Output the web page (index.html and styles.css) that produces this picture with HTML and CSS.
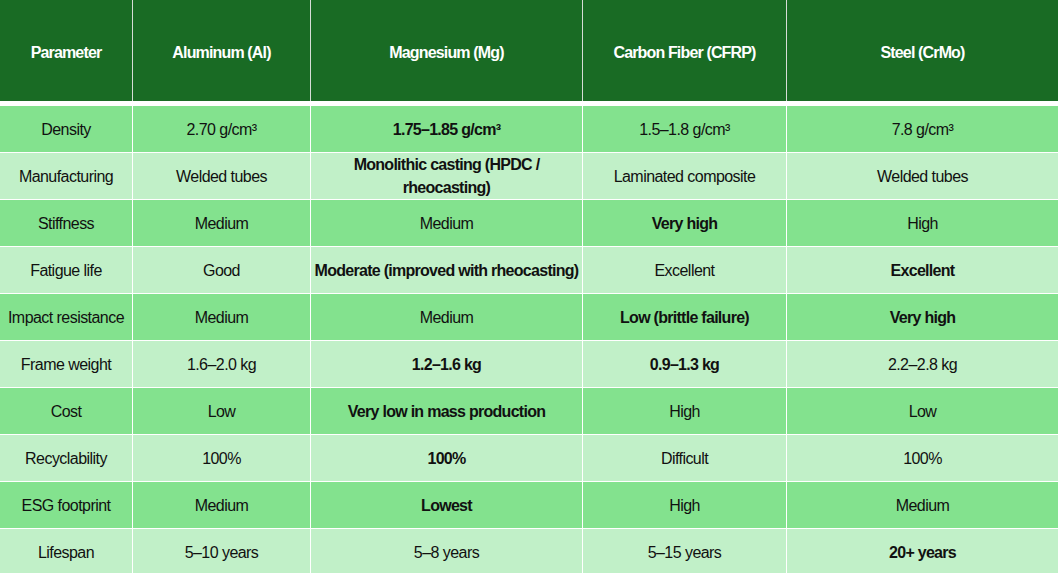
FILE: index.html
```html
<!DOCTYPE html>
<html lang="en">
<head>
<meta charset="utf-8">
<title>Bicycle frame materials comparison</title>
<link rel="stylesheet" href="styles.css">
</head>
<body>
<div class="sheet">
  <div class="head-row">
    <div class="hcell">Parameter</div>
    <div class="hcell">Aluminum (Al)</div>
    <div class="hcell">Magnesium (Mg)</div>
    <div class="hcell">Carbon Fiber (CFRP)</div>
    <div class="hcell">Steel (CrMo)</div>
  </div>
  <div class="body-rows">
    <div class="row dark">
      <div class="cell">Density</div>
      <div class="cell">2.70 g/cm³</div>
      <div class="cell b">1.75–1.85 g/cm³</div>
      <div class="cell">1.5–1.8 g/cm³</div>
      <div class="cell">7.8 g/cm³</div>
    </div>
    <div class="row light">
      <div class="cell">Manufacturing</div>
      <div class="cell">Welded tubes</div>
      <div class="cell b">Monolithic casting (HPDC /<br>rheocasting)</div>
      <div class="cell">Laminated composite</div>
      <div class="cell">Welded tubes</div>
    </div>
    <div class="row dark">
      <div class="cell">Stiffness</div>
      <div class="cell">Medium</div>
      <div class="cell">Medium</div>
      <div class="cell b">Very high</div>
      <div class="cell">High</div>
    </div>
    <div class="row light">
      <div class="cell">Fatigue life</div>
      <div class="cell">Good</div>
      <div class="cell b">Moderate (improved with rheocasting)</div>
      <div class="cell">Excellent</div>
      <div class="cell b">Excellent</div>
    </div>
    <div class="row dark">
      <div class="cell">Impact resistance</div>
      <div class="cell">Medium</div>
      <div class="cell">Medium</div>
      <div class="cell b">Low (brittle failure)</div>
      <div class="cell b">Very high</div>
    </div>
    <div class="row light">
      <div class="cell">Frame weight</div>
      <div class="cell">1.6–2.0 kg</div>
      <div class="cell b">1.2–1.6 kg</div>
      <div class="cell b">0.9–1.3 kg</div>
      <div class="cell">2.2–2.8 kg</div>
    </div>
    <div class="row dark">
      <div class="cell">Cost</div>
      <div class="cell">Low</div>
      <div class="cell b">Very low in mass production</div>
      <div class="cell">High</div>
      <div class="cell">Low</div>
    </div>
    <div class="row light">
      <div class="cell">Recyclability</div>
      <div class="cell">100%</div>
      <div class="cell b">100%</div>
      <div class="cell">Difficult</div>
      <div class="cell">100%</div>
    </div>
    <div class="row dark">
      <div class="cell">ESG footprint</div>
      <div class="cell">Medium</div>
      <div class="cell b">Lowest</div>
      <div class="cell">High</div>
      <div class="cell">Medium</div>
    </div>
    <div class="row light">
      <div class="cell">Lifespan</div>
      <div class="cell">5–10 years</div>
      <div class="cell">5–8 years</div>
      <div class="cell">5–15 years</div>
      <div class="cell b">20+ years</div>
    </div>
  </div>
</div>
</body>
</html>
```

FILE: styles.css
```css
html, body {
  margin: 0;
  padding: 0;
  background: #ffffff;
}

.sheet {
  width: 1058px;
  height: 573px;
  overflow: hidden;
  font-family: "Liberation Sans", Arial, sans-serif;
  background: #ffffff;
}

.head-row,
.row {
  display: grid;
  grid-template-columns: 132px 177px 271px 203px 271px;
  column-gap: 1px;
}

.head-row {
  height: 101px;
  background: #d6dcd6;
}

.hcell {
  background: #196b24;
  color: #ffffff;
  font-weight: bold;
  font-size: 16px;
  letter-spacing: -0.85px;
  display: flex;
  align-items: center;
  justify-content: center;
  text-align: center;
  padding-top: 4px;
}

.body-rows {
  margin-top: 5px;
  display: flex;
  flex-direction: column;
  row-gap: 1px;
}

.row {
  height: 46px;
  background: #ffffff;
}

.cell {
  display: flex;
  align-items: center;
  justify-content: center;
  text-align: center;
  font-size: 16px;
  letter-spacing: -0.55px;
  line-height: 23px;
  color: #111111;
  padding: 0 1px;
  white-space: nowrap;
}

.dark .cell {
  background: #83e28e;
}

.light .cell {
  background: #c1f0c8;
}

.cell.b {
  font-weight: bold;
  letter-spacing: -0.72px;
}
```
